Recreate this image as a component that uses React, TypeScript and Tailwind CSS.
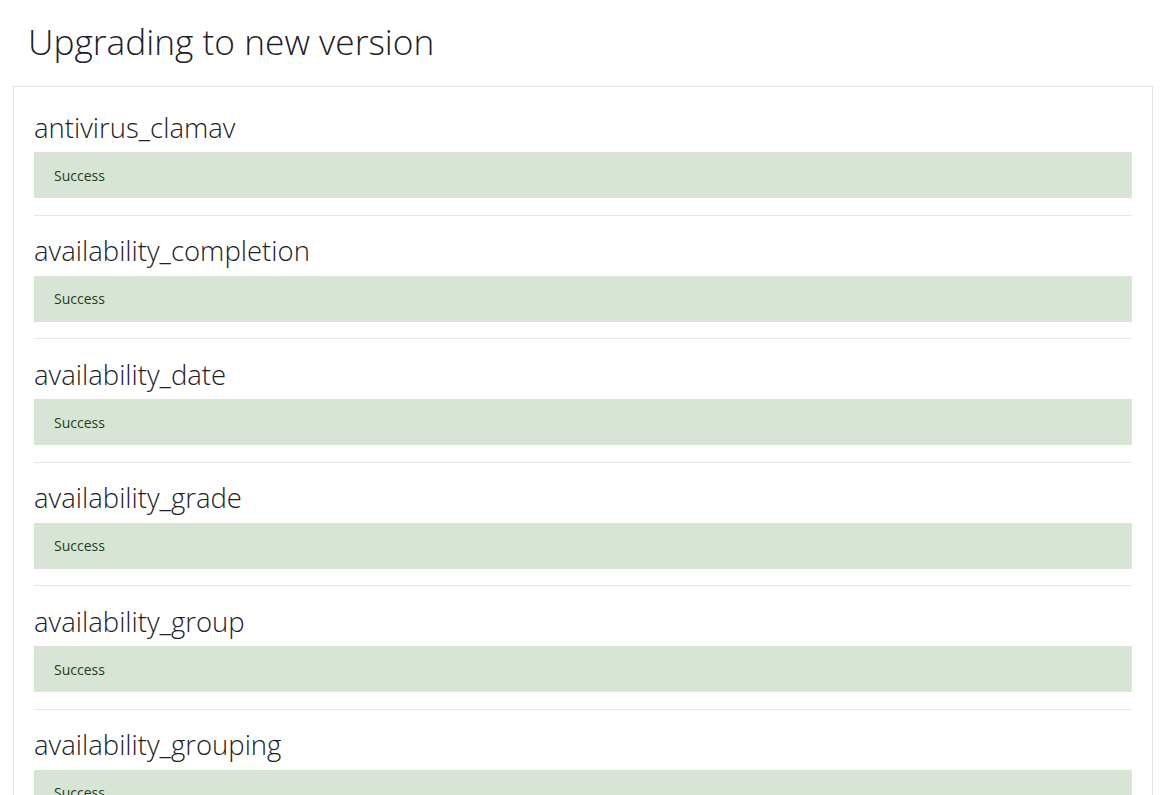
import React from 'react';

const plugins = [
  'antivirus_clamav',
  'availability_completion',
  'availability_date',
  'availability_grade',
  'availability_group',
  'availability_grouping',
  'availability_profile',
];

const App: React.FC = () => {
  return (
    <div className="min-h-screen bg-white text-[#1d2125] font-['Open_Sans',sans-serif]">
      <h2 className="pl-[28px] pt-[20px] pb-[23px] text-[35.3px] leading-[43px] font-light">
        Upgrading to new version
      </h2>

      <div className="ml-[13px] mr-[15px] border border-[#dee2e6] px-[20px] pt-[20px]">
        {plugins.map((name, idx) => (
          <div key={name}>
            {idx > 0 && <hr className="mt-[16.5px] mb-[15px] border-0 border-t border-[#e6e6e6]" />}
            <h3 className="pt-[4.5px] pb-[8px] text-[27.5px] leading-[32.5px] font-light">{name}</h3>
            <div className="h-[46px] flex items-center px-[20px] bg-[#d7e4d6] text-[#1c3f1a] text-[14px]">
              Success
            </div>
          </div>
        ))}
      </div>
    </div>
  );
};

export default App;
